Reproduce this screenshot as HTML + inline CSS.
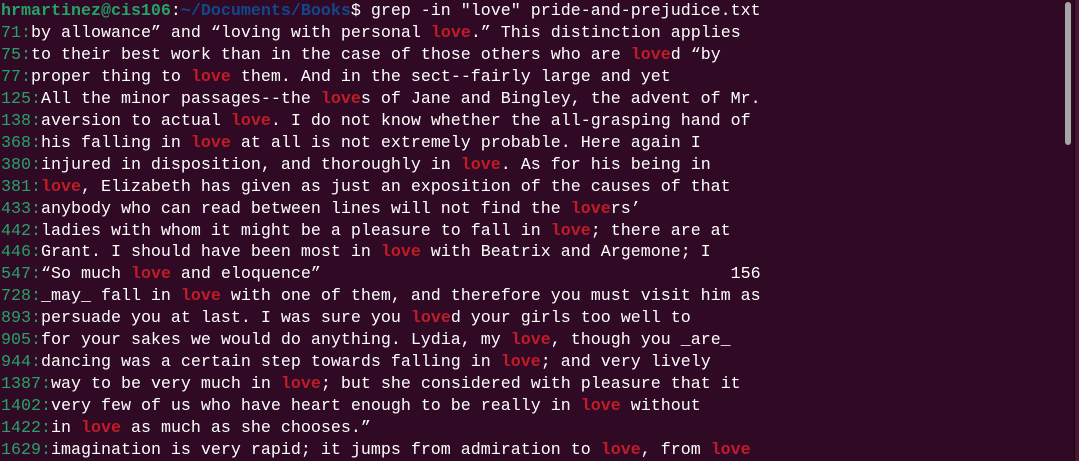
<!DOCTYPE html>
<html><head><meta charset="utf-8"><style>
html,body{margin:0;padding:0;background:#300a24;width:1079px;height:461px;overflow:hidden}
pre{margin:0;padding:1px 0 0 1px;font-family:"Liberation Mono",monospace;font-size:16.67px;line-height:21.95px;color:#ffffff;white-space:pre;letter-spacing:0}
.g{color:#26a269}.gb{color:#26a269;font-weight:bold}.b{color:#12488b;font-weight:bold}.r{color:#c01c28;font-weight:bold}
.sb{position:absolute;left:1065px;top:2px;width:6px;height:143px;border-radius:3px;background:#a6a6a6}
.edge{position:absolute;left:1074px;top:0;width:1px;height:461px;background:#1a0512}
.edge2{position:absolute;left:1075px;top:0;width:4px;height:461px;background:#4a1530}
</style></head><body>
<pre><span class="gb">hrmartinez@cis106</span>:<span class="b">~/Documents/Books</span>$ grep -in "love" pride-and-prejudice.txt
<span class="g">71:</span>by allowance” and “loving with personal <span class="r">love</span>.” This distinction applies
<span class="g">75:</span>to their best work than in the case of those others who are <span class="r">love</span>d “by
<span class="g">77:</span>proper thing to <span class="r">love</span> them. And in the sect--fairly large and yet
<span class="g">125:</span>All the minor passages--the <span class="r">love</span>s of Jane and Bingley, the advent of Mr.
<span class="g">138:</span>aversion to actual <span class="r">love</span>. I do not know whether the all-grasping hand of
<span class="g">368:</span>his falling in <span class="r">love</span> at all is not extremely probable. Here again I
<span class="g">380:</span>injured in disposition, and thoroughly in <span class="r">love</span>. As for his being in
<span class="g">381:</span><span class="r">love</span>, Elizabeth has given as just an exposition of the causes of that
<span class="g">433:</span>anybody who can read between lines will not find the <span class="r">love</span>rs’
<span class="g">442:</span>ladies with whom it might be a pleasure to fall in <span class="r">love</span>; there are at
<span class="g">446:</span>Grant. I should have been most in <span class="r">love</span> with Beatrix and Argemone; I
<span class="g">547:</span>“So much <span class="r">love</span> and eloquence”                                         156
<span class="g">728:</span>_may_ fall in <span class="r">love</span> with one of them, and therefore you must visit him as
<span class="g">893:</span>persuade you at last. I was sure you <span class="r">love</span>d your girls too well to
<span class="g">905:</span>for your sakes we would do anything. Lydia, my <span class="r">love</span>, though you _are_
<span class="g">944:</span>dancing was a certain step towards falling in <span class="r">love</span>; and very lively
<span class="g">1387:</span>way to be very much in <span class="r">love</span>; but she considered with pleasure that it
<span class="g">1402:</span>very few of us who have heart enough to be really in <span class="r">love</span> without
<span class="g">1422:</span>in <span class="r">love</span> as much as she chooses.”
<span class="g">1629:</span>imagination is very rapid; it jumps from admiration to <span class="r">love</span>, from <span class="r">love</span></pre>
<div class="sb"></div><div class="edge"></div><div class="edge2"></div>
</body></html>
